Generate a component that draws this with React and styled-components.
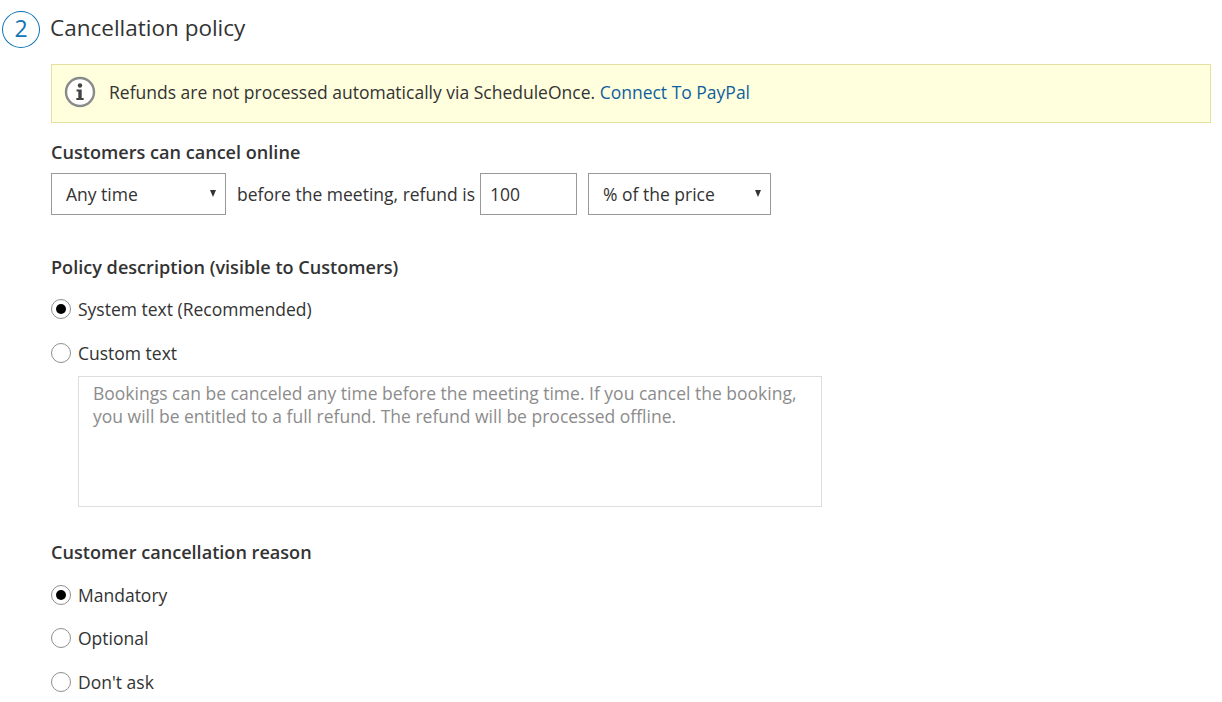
import React from 'react'
import styled, { createGlobalStyle } from 'styled-components'

const Global = createGlobalStyle`
    html, body {
        margin: 0;
        padding: 0;
        background: #fff;
    }

    body {
        font-family: "Open Sans", sans-serif;
        font-size: 17.5px;
        color: #333;
        overflow: hidden;
    }
`;

const Page = styled.div`
    width: 1222px;
    height: 702px;
    box-sizing: border-box;
    padding: 10px 11px 0 2px;
    overflow: hidden;
`;

const Header = styled.header`
    display: flex;
    align-items: center;
    gap: 10px;
    height: 38px;
`;

const Step = styled.span`
    box-sizing: border-box;
    width: 38px;
    height: 37px;
    padding-bottom: 2px;
    border: 1px solid #0f75b5;
    border-radius: 50%;
    display: flex;
    align-items: center;
    justify-content: center;
    font-size: 23px;
    color: #0f75b5;
`;

const Title = styled.h2`
    margin: 0 0 2px;
    font-size: 22.5px;
    font-weight: 400;
    line-height: 36px;
`;

const Body = styled.div`
    padding-left: 49px;
`;

const Notice = styled.div`
    box-sizing: border-box;
    height: 59px;
    margin-top: 16px;
    padding: 0 0 3px 12px;
    display: flex;
    align-items: center;
    gap: 13px;
    background: #ffffdd;
    border: 1px solid #e6e0a0;
`;

const Link = styled.a`
    color: #0f5f9e;
    text-decoration: none;
`;

const Label = styled.div`
    font-size: 18.1px;
    font-weight: 600;
    line-height: 22px;
    margin-top: ${p => p.$top}px;
`;

const Row = styled.div`
    display: flex;
    align-items: center;
    height: 42px;
    margin-top: 10px;
`;

const Select = styled.div`
    box-sizing: border-box;
    width: ${p => p.$width}px;
    height: 42px;
    margin: ${p => p.$margin};
    padding: 0 9px 0 14px;
    display: flex;
    align-items: center;
    justify-content: space-between;
    border: 1px solid #999;
`;

const Arrow = styled.i`
    width: 0;
    height: 0;
    border-left: 3.5px solid transparent;
    border-right: 3.5px solid transparent;
    border-top: 7px solid #333;
    margin-top: -2px;
`;

const Input = styled.div`
    box-sizing: border-box;
    width: 97px;
    height: 42px;
    margin-left: 5px;
    padding-left: 9px;
    display: flex;
    align-items: center;
    border: 1px solid #999;
`;

const Option = styled.label`
    display: flex;
    align-items: center;
    gap: 7px;
    height: 22px;
    margin-top: ${p => p.$top}px;
`;

const Radio = styled.span`
    box-sizing: border-box;
    width: 20px;
    height: 20px;
    border: 1px solid #8f8f8f;
    border-radius: 50%;
    display: flex;
    align-items: center;
    justify-content: center;

    &::after {
        content: '';
        display: ${p => (p.$checked ? 'block' : 'none')};
        width: 10px;
        height: 10px;
        border-radius: 50%;
        background: #000;
    }
`;

const TextArea = styled.div`
    box-sizing: border-box;
    width: 744px;
    height: 131px;
    margin: 12px 0 0 27px;
    padding: 5px 14px;
    border: 1px solid #ddd;
    color: #8c8c8c;
    line-height: 23px;
`;

const InfoIcon = () => (
    <svg width="32" height="32" viewBox="0 0 32 32">
        <circle cx="16" cy="16" r="14" fill="#fff" stroke="#8a8a8a" strokeWidth="2.4" />
        <circle cx="16" cy="9.5" r="2.2" fill="#444" />
        <path d="M12.5 13.5h5.2v8.5h2v2h-7.4v-2h2v-6.5h-1.8z" fill="#444" />
    </svg>
);

export default () => {
    return (
        <Page>
            <Global />
            <Header>
                <Step>2</Step>
                <Title>Cancellation policy</Title>
            </Header>
            <Body>
                <Notice>
                    <InfoIcon />
                    <span>
                        Refunds are not processed automatically via ScheduleOnce. <Link href="#">Connect To PayPal</Link>
                    </span>
                </Notice>

                <Label $top={18}>Customers can cancel online</Label>
                <Row>
                    <Select $width={175} $margin="0 11px 0 0">Any time<Arrow /></Select>
                    before the meeting, refund is
                    <Input>100</Input>
                    <Select $width={183} $margin="0 0 0 11px">% of the price<Arrow /></Select>
                </Row>

                <Label $top={41}>Policy description (visible to Customers)</Label>
                <Option $top={20}><Radio $checked />System text (Recommended)</Option>
                <Option $top={22}><Radio />Custom text</Option>
                <TextArea>
                    Bookings can be canceled any time before the meeting time. If you cancel the booking,
                    you will be entitled to a full refund. The refund will be processed offline.
                </TextArea>

                <Label $top={34}>Customer cancellation reason</Label>
                <Option $top={21}><Radio $checked />Mandatory</Option>
                <Option $top={21}><Radio />Optional</Option>
                <Option $top={22}><Radio />Don't ask</Option>
            </Body>
        </Page>
    )
}
